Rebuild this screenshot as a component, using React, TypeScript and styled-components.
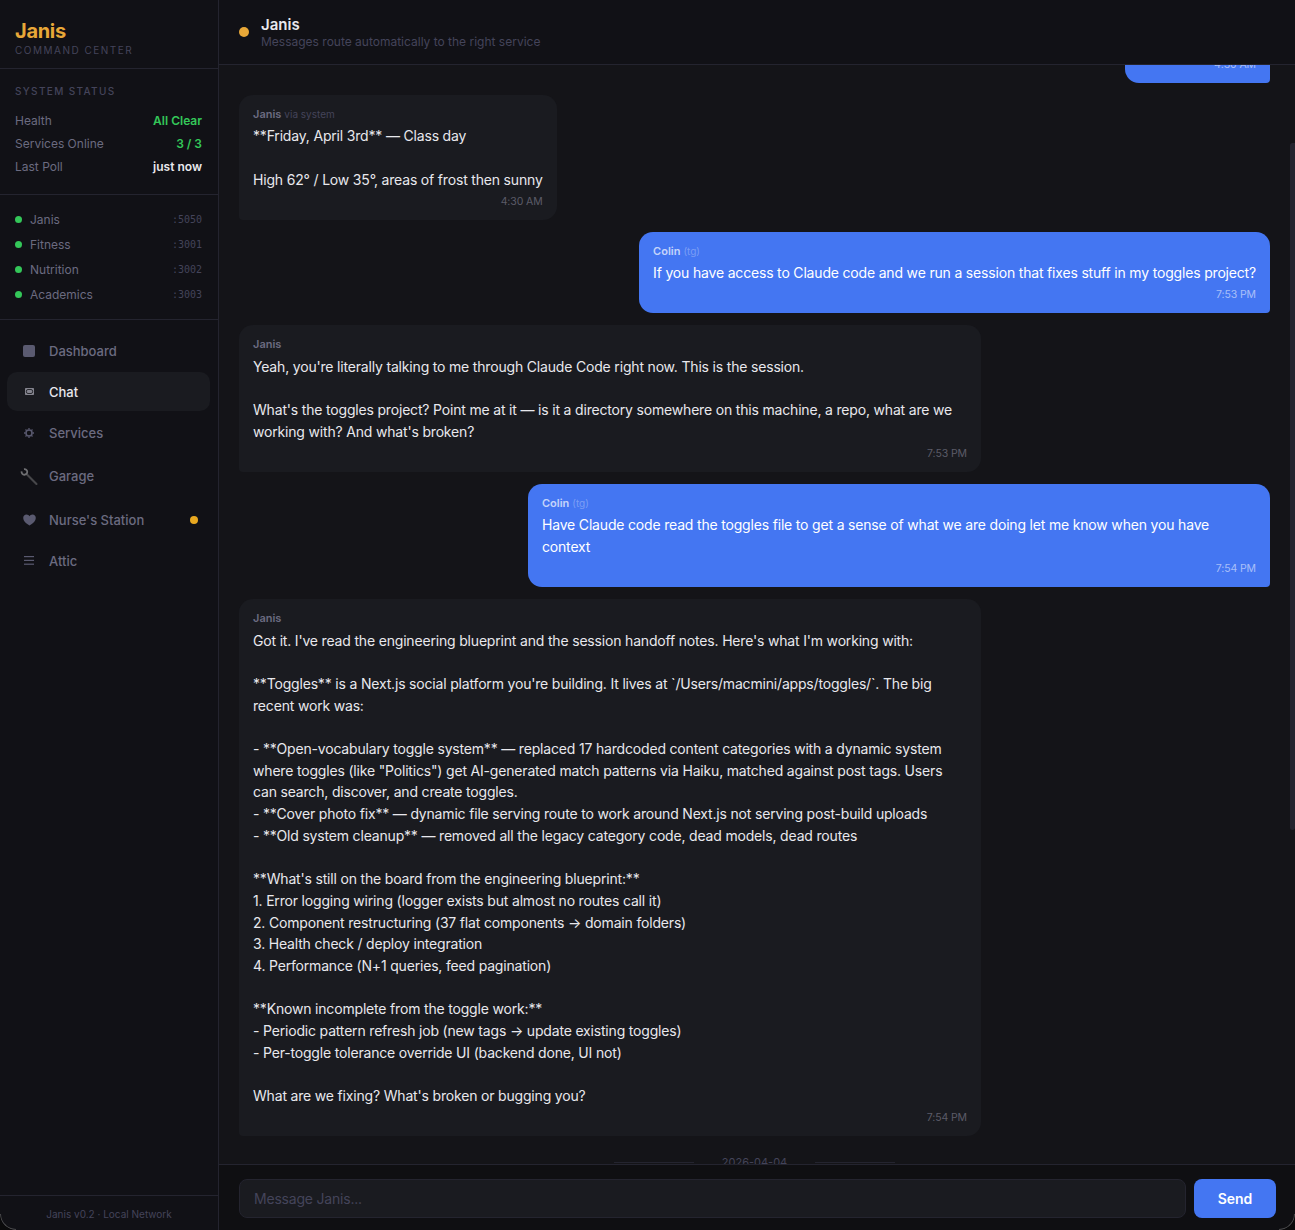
import React, { FC } from 'react'
import styled, { createGlobalStyle } from 'styled-components'

const GlobalStyle = createGlobalStyle`
  html, body {
    margin: 0;
    height: 100%;
    background: #0a0a0b;
  }
  * {
    box-sizing: border-box;
  }
`

const Shell = styled.div`
  position: relative;
  display: flex;
  width: 1295px;
  height: 1230px;
  overflow: hidden;
  border-radius: 0 0 16px 16px;
  font-family: Inter, "Liberation Sans", sans-serif;
  background: #0d0d0f;
  color: #e8e8ed;
`

const WindowCorner = styled.span<{ $side: 'left' | 'right' }>`
  position: absolute;
  bottom: 0;
  ${p => p.$side}: 0;
  width: 16px;
  height: 16px;
  border-bottom: 1px solid #4a4a4c;
  border-${p => p.$side}: 1px solid #4a4a4c;
  border-bottom-${p => p.$side}-radius: 16px;
`

const Sidebar = styled.aside`
  width: 219px;
  flex-shrink: 0;
  display: flex;
  flex-direction: column;
  background: #111116;
  border-right: 1px solid #24242f;
`

const Brand = styled.div`
  height: 69px;
  padding: 20px 15px 0;
  border-bottom: 1px solid #24242f;
`

const BrandName = styled.div`
  font-size: 20px;
  line-height: 22px;
  font-weight: 700;
  letter-spacing: -0.3px;
  color: #e8a838;
`

const BrandSub = styled.div`
  margin-top: 1px;
  font-size: 10px;
  line-height: 14px;
  letter-spacing: 1.5px;
  color: #44445a;
`

const StatusSection = styled.section`
  height: 126px;
  padding: 16px 16px 0 15px;
  border-bottom: 1px solid #24242f;
`

const SectionLabel = styled.div`
  margin-bottom: 12px;
  font-size: 10px;
  line-height: 12px;
  font-weight: 500;
  letter-spacing: 1.35px;
  color: #44445a;
`

const StatusRow = styled.div`
  display: flex;
  justify-content: space-between;
  align-items: center;
  height: 23px;
  font-size: 12px;
  color: #6b6b80;
`

const StatusValue = styled.span<{ $tone: 'green' | 'white' }>`
  font-weight: 600;
  color: ${p => (p.$tone === 'green' ? '#34c759' : '#e8e8ed')};
`

const ServiceList = styled.section`
  height: 125px;
  padding: 12px 16px 0 15px;
  border-bottom: 1px solid #24242f;
`

const ServiceRow = styled.div`
  display: flex;
  align-items: center;
  height: 25px;
  font-size: 12px;
  color: #6b6b80;
`

const ServiceDot = styled.span`
  width: 7px;
  height: 7px;
  margin-right: 8px;
  border-radius: 50%;
  background: #34c759;
`

const Port = styled.span`
  margin-left: auto;
  font-family: "DejaVu Sans Mono", "Liberation Mono", monospace;
  font-size: 10px;
  color: #44445a;
`

const Nav = styled.nav`
  flex: 1;
  padding: 11px 8px 0 7px;
`

const NavItem = styled.div<{ $active?: boolean; $height: number }>`
  display: flex;
  align-items: center;
  height: ${p => p.$height}px;
  margin-bottom: 2px;
  padding: 0 12px 0 13px;
  border-radius: 10px;
  font-size: 13px;
  font-weight: 500;
  background: ${p => (p.$active ? '#1a1b20' : 'transparent')};
  color: ${p => (p.$active ? '#e8e8ed' : '#6b6b80')};
`

const NavIcon = styled.span`
  display: flex;
  align-items: center;
  justify-content: center;
  width: 18px;
  margin-right: 11px;
  color: #5a5a70;
`

const AlertDot = styled.span`
  width: 8px;
  height: 8px;
  margin-left: auto;
  border-radius: 50%;
  background: #e8a820;
`

const SidebarFooter = styled.div`
  height: 35px;
  padding-top: 12px;
  border-top: 1px solid #24242f;
  text-align: center;
  font-size: 10px;
  line-height: 12px;
  color: #44445a;
`

const Main = styled.main`
  flex: 1;
  min-width: 0;
  display: flex;
  flex-direction: column;
`

const ChatHeader = styled.header`
  height: 65px;
  flex-shrink: 0;
  display: flex;
  align-items: center;
  gap: 12px;
  padding: 0 20px;
  background: #111116;
  border-bottom: 1px solid #24242f;
`

const HeaderDot = styled.span`
  width: 10px;
  height: 10px;
  border-radius: 50%;
  background: #e8a838;
`

const HeaderTitle = styled.div`
  font-size: 15px;
  line-height: 18px;
  font-weight: 600;
`

const HeaderSub = styled.div`
  font-size: 12px;
  line-height: 15px;
  color: #44445a;
`

const Scroller = styled.div`
  flex: 1;
  min-height: 0;
  overflow: hidden;
  position: relative;
  background: #141418;
`

const Thumb = styled.div`
  position: absolute;
  top: 78px;
  right: 0;
  width: 5px;
  height: 687px;
  border-radius: 3px 0 3px 3px;
  background: #24242f;
`

const MessageList = styled.div`
  display: flex;
  flex-direction: column;
  gap: 12px;
  margin-top: -63.85px;
  padding: 0 25px 0 20px;
`

const Bubble = styled.div<{ $mine?: boolean; $wide?: boolean }>`
  align-self: ${p => (p.$mine ? 'flex-end' : 'flex-start')};
  max-width: 742px;
  width: ${p => (p.$wide ? '742px' : 'auto')};
  padding: 13px 14px 12px;
  border-radius: ${p => (p.$mine ? '14px 14px 4px 14px' : '14px 14px 14px 4px')};
  background: ${p => (p.$mine ? '#4476f2' : '#1a1b20')};
  color: ${p => (p.$mine ? '#ffffff' : '#e8e8ed')};
`

const Sender = styled.div<{ $mine?: boolean }>`
  font-size: 11px;
  line-height: 13px;
  font-weight: 600;
  color: ${p => (p.$mine ? 'rgba(255,255,255,0.7)' : '#6b6b80')};
`

const Via = styled.span<{ $mine?: boolean }>`
  margin-left: 3px;
  font-size: 10px;
  font-weight: 400;
  color: ${p => (p.$mine ? 'rgba(255,255,255,0.3)' : '#44445a')};
`

const Body = styled.div`
  margin-top: 4.4px;
  font-size: 14px;
  line-height: 1.55;
  white-space: pre-wrap;
  letter-spacing: -0.18px;
`

const Time = styled.div<{ $mine?: boolean }>`
  margin-top: 4.5px;
  text-align: right;
  font-size: 10.5px;
  line-height: 13px;
  letter-spacing: -0.1px;
  color: ${p => (p.$mine ? 'rgba(255,255,255,0.55)' : '#5c5c68')};
`

const DateDivider = styled.div`
  display: flex;
  align-items: center;
  justify-content: center;
  gap: 28px;
  margin-top: 7px;
  font-size: 11px;
  line-height: 14px;
  color: #44445a;
  &::before, &::after {
    content: '';
    width: 80px;
    height: 1px;
    background: #24242f;
  }
`

const Composer = styled.form`
  height: 66px;
  flex-shrink: 0;
  display: flex;
  align-items: center;
  gap: 8px;
  padding: 2px 19px 0 20px;
  background: #0f0f12;
  border-top: 1px solid #24242f;
`

const MessageInput = styled.input`
  flex: 1;
  height: 39px;
  padding: 0 14px;
  border: 1px solid #24242f;
  border-radius: 8px;
  outline: none;
  background: #1a1b20;
  font: 14px Inter, "Liberation Sans", sans-serif;
  letter-spacing: -0.2px;
  color: #e8e8ed;
  &::placeholder {
    color: #44445a;
  }
`

const SendButton = styled.button`
  width: 82px;
  height: 39px;
  border: 0;
  border-radius: 8px;
  background: #4476f2;
  color: #fff;
  font: 600 14px Inter, "Liberation Sans", sans-serif;
`

const services = [
  { name: 'Janis', port: ':5050' },
  { name: 'Fitness', port: ':3001' },
  { name: 'Nutrition', port: ':3002' },
  { name: 'Academics', port: ':3003' },
]

const SquareIcon = () => (
  <svg width="12" height="12" viewBox="0 0 12 12"><rect width="12" height="12" rx="2" fill="currentColor" /></svg>
)

const MailIcon = () => (
  <svg width="9" height="7" viewBox="0 0 9 7">
    <rect width="9" height="7" rx="0.8" fill="#85858f" />
    <rect x="1.4" y="1.5" width="6.2" height="4" rx="1.6" fill="none" stroke="#1f2025" strokeWidth="0.9" />
  </svg>
)

const GearIcon = () => (
  <svg width="10" height="10" viewBox="0 0 10 10" fill="none" stroke="currentColor">
    <circle cx="5" cy="5" r="3" strokeWidth="1.5" />
    <path d="M5 0V1.6M5 8.4V10M0 5H1.6M8.4 5H10M1.5 1.5L2.6 2.6M7.4 7.4L8.5 8.5M8.5 1.5L7.4 2.6M2.6 7.4L1.5 8.5" strokeWidth="1.3" />
  </svg>
)

const WrenchIcon = () => (
  <svg width="19" height="19" viewBox="0 0 19 19" fill="none">
    <path d="M6.6 6.6L17.4 17.4" stroke="#47474a" strokeWidth="2.2" strokeLinecap="round" />
    <path d="M1.7 4.2A3 3 0 1 0 4.2 1.7" stroke="#707073" strokeWidth="1.9" />
  </svg>
)

const HeartIcon = () => (
  <svg width="13" height="12" viewBox="0 0 13 12">
    <path d="M6.5 11.6 C2.6 9 0.2 6.9 0.2 3.9 C0.2 1.9 1.7 0.4 3.5 0.4 C4.8 0.4 5.9 1.1 6.5 2.2 C7.1 1.1 8.2 0.4 9.5 0.4 C11.3 0.4 12.8 1.9 12.8 3.9 C12.8 6.9 10.4 9 6.5 11.6 Z" fill="currentColor" />
  </svg>
)

const MenuIcon = () => (
  <svg width="10" height="9" viewBox="0 0 10 9" fill="currentColor">
    <rect y="0" width="10" height="1.2" />
    <rect y="3.8" width="10" height="1.2" />
    <rect y="7.6" width="10" height="1.2" />
  </svg>
)

const App: FC = () => {
  return (
    <>
      <GlobalStyle />
      <Shell>
        <Sidebar>
          <Brand>
            <BrandName>Janis</BrandName>
            <BrandSub>COMMAND CENTER</BrandSub>
          </Brand>
          <StatusSection>
            <SectionLabel>SYSTEM STATUS</SectionLabel>
            <StatusRow>Health<StatusValue $tone="green">All Clear</StatusValue></StatusRow>
            <StatusRow>Services Online<StatusValue $tone="green">3 / 3</StatusValue></StatusRow>
            <StatusRow>Last Poll<StatusValue $tone="white">just now</StatusValue></StatusRow>
          </StatusSection>
          <ServiceList>
            {services.map(s => (
              <ServiceRow key={s.name}>
                <ServiceDot />
                {s.name}
                <Port>{s.port}</Port>
              </ServiceRow>
            ))}
          </ServiceList>
          <Nav>
            <NavItem $height={39}><NavIcon><SquareIcon /></NavIcon>Dashboard</NavItem>
            <NavItem $height={39} $active><NavIcon><MailIcon /></NavIcon>Chat</NavItem>
            <NavItem $height={39}><NavIcon><GearIcon /></NavIcon>Services</NavItem>
            <NavItem $height={44}><NavIcon><WrenchIcon /></NavIcon>Garage</NavItem>
            <NavItem $height={39}><NavIcon><HeartIcon /></NavIcon>Nurse's Station<AlertDot /></NavItem>
            <NavItem $height={39}><NavIcon><MenuIcon /></NavIcon>Attic</NavItem>
          </Nav>
          <SidebarFooter>Janis v0.2 · Local Network</SidebarFooter>
        </Sidebar>
        <Main>
          <ChatHeader>
            <HeaderDot />
            <div>
              <HeaderTitle>Janis</HeaderTitle>
              <HeaderSub>Messages route automatically to the right service</HeaderSub>
            </div>
          </ChatHeader>
          <Scroller>
            <Thumb />
            <MessageList>
              <Bubble $mine>
                <Sender $mine>Colin<Via $mine>(tg)</Via></Sender>
                <Body>What's today like?</Body>
                <Time $mine>4:30 AM</Time>
              </Bubble>
              <Bubble>
                <Sender>Janis<Via>via system</Via></Sender>
                <Body>{`**Friday, April 3rd** — Class day

High 62° / Low 35°, areas of frost then sunny`}</Body>
                <Time>4:30 AM</Time>
              </Bubble>
              <Bubble $mine>
                <Sender $mine>Colin<Via $mine>(tg)</Via></Sender>
                <Body>If you have access to Claude code and we run a session that fixes stuff in my toggles project?</Body>
                <Time $mine>7:53 PM</Time>
              </Bubble>
              <Bubble $wide>
                <Sender>Janis</Sender>
                <Body>{`Yeah, you're literally talking to me through Claude Code right now. This is the session.

What's the toggles project? Point me at it — is it a directory somewhere on this machine, a repo, what are we working with? And what's broken?`}</Body>
                <Time>7:53 PM</Time>
              </Bubble>
              <Bubble $mine $wide>
                <Sender $mine>Colin<Via $mine>(tg)</Via></Sender>
                <Body>Have Claude code read the toggles file to get a sense of what we are doing let me know when you have context</Body>
                <Time $mine>7:54 PM</Time>
              </Bubble>
              <Bubble $wide>
                <Sender>Janis</Sender>
                <Body>{`Got it. I've read the engineering blueprint and the session handoff notes. Here's what I'm working with:

**Toggles** is a Next.js social platform you're building. It lives at \`/Users/macmini/apps/toggles/\`. The big recent work was:

- **Open-vocabulary toggle system** — replaced 17 hardcoded content categories with a dynamic system where toggles (like "Politics") get AI-generated match patterns via Haiku, matched against post tags. Users can search, discover, and create toggles.
- **Cover photo fix** — dynamic file serving route to work around Next.js not serving post-build uploads
- **Old system cleanup** — removed all the legacy category code, dead models, dead routes

**What's still on the board from the engineering blueprint:**
1. Error logging wiring (logger exists but almost no routes call it)
2. Component restructuring (37 flat components → domain folders)
3. Health check / deploy integration
4. Performance (N+1 queries, feed pagination)

**Known incomplete from the toggle work:**
- Periodic pattern refresh job (new tags → update existing toggles)
- Per-toggle tolerance override UI (backend done, UI not)

What are we fixing? What's broken or bugging you?`}</Body>
                <Time>7:54 PM</Time>
              </Bubble>
              <DateDivider>2026-04-04</DateDivider>
            </MessageList>
          </Scroller>
          <Composer onSubmit={e => e.preventDefault()}>
            <MessageInput placeholder="Message Janis..." />
            <SendButton type="button">Send</SendButton>
          </Composer>
        </Main>
        <WindowCorner $side="left" />
        <WindowCorner $side="right" />
      </Shell>
    </>
  )
}

export default App
